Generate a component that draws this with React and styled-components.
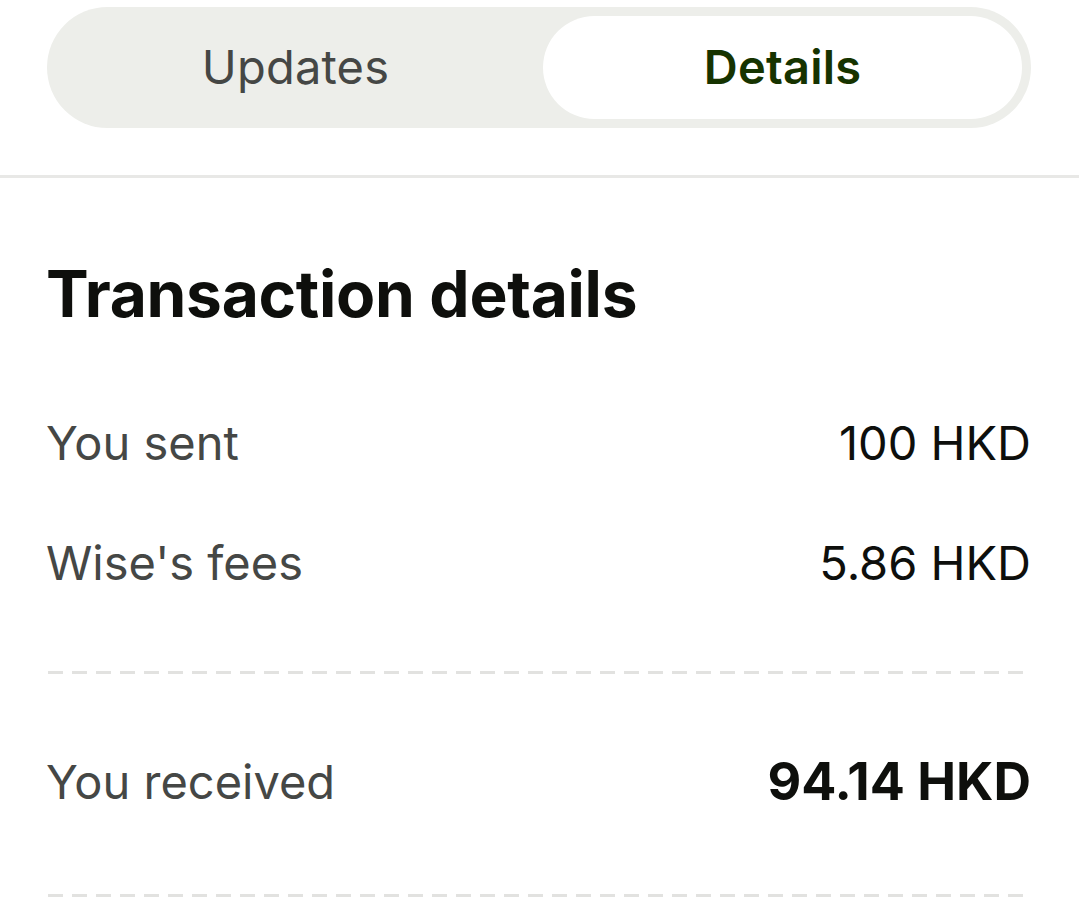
import React from "react";
import styled, { createGlobalStyle } from "styled-components";

const Global = createGlobalStyle`
  html, body { margin: 0; padding: 0; background: #ffffff; }
  body { font-family: Inter, "Noto Sans", "Liberation Sans", sans-serif; -webkit-font-smoothing: antialiased; }
  * { box-sizing: border-box; }
`;

const Page = styled.div`
  width: 1079px;
  min-height: 901px;
  background: #fff;
  overflow: hidden;
`;

const TabBar = styled.div`
  margin: 7px 48px 0 47px;
  height: 121px;
  border-radius: 61px;
  background: #edeeea;
  padding: 9px;
  display: grid;
  grid-template-columns: 1fr 1fr;
  gap: 8px;
`;

const Tab = styled.div`
  display: flex;
  align-items: center;
  justify-content: center;
  border-radius: 52px;
  font-size: 47px;
  letter-spacing: 0.2px;
  padding-bottom: 2px;
  background: ${(p) => (p.$active ? "#ffffff" : "transparent")};
  color: ${(p) => (p.$active ? "#163300" : "#454745")};
  font-weight: ${(p) => (p.$active ? 600 : 400)};
`;

const Divider = styled.div`
  margin-top: 47px;
  height: 3px;
  background: #e8e8e6;
`;

const Section = styled.div`
  padding: 0 48px 0 46px;
`;

const Title = styled.h2`
  margin: 78px 0 0;
  font-size: 64px;
  line-height: 76px;
  font-weight: 700;
  color: #0e0f0c;
  letter-spacing: -0.3px;
`;

const Row = styled.div`
  display: flex;
  justify-content: space-between;
  align-items: center;
  height: 120px;
  margin-top: ${(p) => p.$mt || 0}px;
`;

const Label = styled.span`
  font-size: 47px;
  color: #454745;
`;

const Value = styled.span`
  font-size: ${(p) => (p.$strong ? 52 : 47)}px;
  font-weight: ${(p) => (p.$strong ? 700 : 400)};
  color: #0e0f0c;
`;

const Dashed = styled.div`
  height: 3px;
  margin-top: ${(p) => p.$mt || 0}px;
  margin-left: 2px;
  margin-right: 8px;
  background-image: linear-gradient(to right, #e2e2e0 0 15px, transparent 15px 24px);
  background-size: 24px 3px;
  background-repeat: repeat-x;
`;

export default function App() {
  return (
    <Page>
      <Global />
      <TabBar>
        <Tab>Updates</Tab>
        <Tab $active>Details</Tab>
      </TabBar>
      <Divider />
      <Section>
        <Title>Transaction details</Title>
        <Row $mt={50}>
          <Label>You sent</Label>
          <Value>100 HKD</Value>
        </Row>
        <Row>
          <Label>Wise's fees</Label>
          <Value>5.86 HKD</Value>
        </Row>
        <Dashed $mt={49} />
        <Row $mt={47}>
          <Label>You received</Label>
          <Value $strong>94.14 HKD</Value>
        </Row>
        <Dashed $mt={53} />
      </Section>
    </Page>
  );
}
